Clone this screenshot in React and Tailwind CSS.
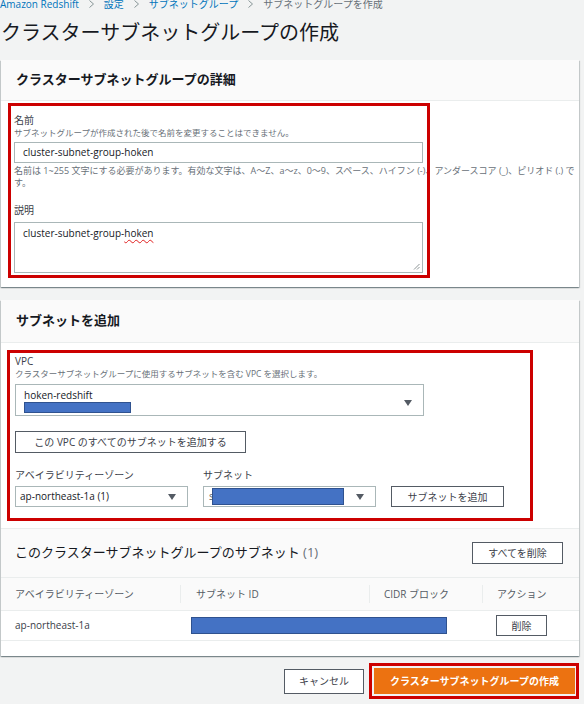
import React from 'react';

const Chevron = () => (
  <svg width="5" height="8" viewBox="0 0 5 8" className="mx-[10px] shrink-0">
    <path d="M0.5 0.5L4.5 4L0.5 7.5" fill="none" stroke="#879596" strokeWidth="1" />
  </svg>
);

const Caret = () => (
  <svg width="8" height="6" viewBox="0 0 8 6" className="shrink-0">
    <path d="M0 0h8L4 6z" fill="#545b64" />
  </svg>
);

// blue boxes that hide ids in the screenshot
const Redacted = ({ className }) => (
  <div className={`border border-[#2f528f] bg-[#4472c4] ${className}`} />
);

// red annotation frame drawn over the form
const Mark = ({ className }) => (
  <div className={`pointer-events-none absolute border-[3px] border-[#cc0000] ${className}`} />
);

const Card = ({ children, className = '' }) => (
  <div
    className={`relative bg-white shadow-[0_1px_1px_0_rgba(0,28,36,0.3),1px_1px_1px_0_rgba(0,28,36,0.15),-1px_1px_1px_0_rgba(0,28,36,0.15)] ${className}`}
  >
    {children}
  </div>
);

const Button = ({ children, className = '' }) => (
  <div
    className={`flex items-center justify-center border border-[#545b64] bg-white text-[10px] leading-[14px] text-[#3b4049] ${className}`}
  >
    {children}
  </div>
);

export default function App() {
  return (
    <div className="flex min-h-[704px] flex-col overflow-hidden bg-[#f2f3f3] pl-[1px] pr-[5px] font-['Open_Sans','Noto_Sans_CJK_JP',sans-serif] text-[#16191f]">
      <nav className="-ml-[1px] -mt-[3px] flex h-[14px] items-center text-[10px] leading-[14px]">
        <span className="text-[#0073bb]">Amazon Redshift</span>
        <Chevron />
        <span className="text-[#0073bb]">設定</span>
        <Chevron />
        <span className="text-[#0073bb]">サブネットグループ</span>
        <Chevron />
        <span className="text-[#687078]">サブネットグループを作成</span>
      </nav>

      <h1 className="mt-[8px] text-[20px] font-normal leading-[28px]">
        クラスターサブネットグループの作成
      </h1>

      {/* details */}
      <Card className="mt-[13px]">
        <div className="flex h-[41px] items-center border-b border-[#eaeded] bg-[#fafafa] px-[15px]">
          <h2 className="text-[13px] font-bold">クラスターサブネットグループの詳細</h2>
        </div>
        <div className="px-[13px] pb-[14px] pt-[12px]">
          <div className="text-[10px] leading-[14px] text-[#3b4049]">名前</div>
          <div className="text-[8.5px] leading-[12px] text-[#687078]">
            サブネットグループが作成された後で名前を変更することはできません。
          </div>
          <div className="mt-[3px] flex h-[21px] w-[409px] items-center border border-[#aab7b8] px-[8px] text-[10px]">
            cluster-subnet-group-hoken
          </div>
          <div className="mt-[2px] whitespace-nowrap text-[9px] leading-[12px] text-[#687078]">
            名前は 1~255 文字にする必要があります。有効な文字は、A～Z、a～z、0～9、スペース、ハイフン (-)、アンダースコア (_)、ピリオド (.) で
            <br />
            す。
          </div>
          <div className="mt-[14px] text-[10px] leading-[14px] text-[#3b4049]">説明</div>
          <div className="relative mt-[5px] h-[51px] w-[409px] border border-[#aab7b8] px-[8px] pt-[3px] text-[10px] leading-[14px]">
            cluster-subnet-group-
            <span className="underline decoration-[#e02020] decoration-wavy decoration-1 underline-offset-2">hoken</span>
            <svg width="7" height="7" viewBox="0 0 7 7" className="absolute bottom-[2px] right-[2px]">
              <path d="M6.5 1L1 6.5M6.5 4L4 6.5" stroke="#8d9596" strokeWidth="1" />
            </svg>
          </div>
        </div>
        <Mark className="left-[7px] top-[43px] h-[175px] w-[422px]" />
      </Card>

      {/* add subnets */}
      <Card className="mt-[13px]">
        <div className="flex h-[43px] items-center border-b border-[#eaeded] bg-[#fafafa] px-[15px]">
          <h2 className="text-[13px] font-bold">サブネットを追加</h2>
        </div>
        <div className="px-[14px] pb-[21px] pt-[12px]">
          <div className="text-[10px] leading-[13px] text-[#3b4049]">VPC</div>
          <div className="text-[8.5px] leading-[12px] text-[#687078]">
            クラスターサブネットグループに使用するサブネットを含む VPC を選択します。
          </div>
          <div className="mt-[4px] flex h-[32px] w-[409px] items-start justify-between border border-[#aab7b8] pl-[8px] pr-[11px] pt-[3px]">
            <div>
              <div className="text-[10px] leading-[14px]">hoken-redshift</div>
              <Redacted className="h-[11px] w-[107px]" />
            </div>
            <div className="pt-[12px]">
              <Caret />
            </div>
          </div>
          <Button className="mt-[15px] h-[22px] w-[231px]">この VPC のすべてのサブネットを追加する</Button>

          <div className="mt-[15px] flex items-end gap-[15px]">
            <div className="w-[173px]">
              <div className="text-[10px] leading-[14px] text-[#3b4049]">アベイラビリティーゾーン</div>
              <div className="mt-[4px] flex h-[21px] items-center justify-between border border-[#aab7b8] pl-[4px] pr-[11px] text-[10px]">
                <span>ap-northeast-1a (1)</span>
                <Caret />
              </div>
            </div>
            <div className="w-[173px]">
              <div className="text-[10px] leading-[14px] text-[#3b4049]">サブネット</div>
              <div className="mt-[4px] flex h-[21px] items-center justify-between border border-[#aab7b8] pl-[5px] pr-[11px] text-[10px]">
                <div className="relative flex items-center">
                  <span className="text-[#545b64]">s</span>
                  <Redacted className="-ml-[2px] h-[17px] w-[132px]" />
                </div>
                <Caret />
              </div>
            </div>
            <Button className="h-[21px] w-[113px]">サブネットを追加</Button>
          </div>
        </div>

        <div className="flex h-[49px] items-center justify-between border-t border-[#eaeded] bg-[#fafafa] pl-[14px] pr-[16px]">
          <h2 className="text-[13px] font-normal">
            このクラスターサブネットグループのサブネット <span className="text-[#687078]">(1)</span>
          </h2>
          <Button className="h-[22px] w-[91px]">すべてを削除</Button>
        </div>

        <div className="grid h-[34px] grid-cols-[179px_189px_113px_97px] items-center border-y border-[#eaeded] bg-[#fafafa] text-[10px] text-[#545b64]">
          <div className="pl-[14px]">アベイラビリティーゾーン</div>
          <div className="border-l border-[#eaeded] pl-[15px] leading-[18px]">サブネット ID</div>
          <div className="border-l border-[#eaeded] pl-[14px] leading-[18px]">CIDR ブロック</div>
          <div className="border-l border-[#eaeded] pl-[14px] leading-[18px]">アクション</div>
        </div>
        <div className="grid h-[30px] grid-cols-[179px_189px_113px_97px] items-center border-b border-[#eaeded] text-[10px]">
          <div className="pl-[14px] text-[#3b4049]">ap-northeast-1a</div>
          <div className="pl-[11px]">
            <Redacted className="h-[17px] w-[256px]" />
          </div>
          <div />
          <div className="pl-[14px]">
            <Button className="h-[21px] w-[51px]">削除</Button>
          </div>
        </div>
        <div className="h-[15px]" />

        <Mark className="left-[6px] top-[50px] h-[171px] w-[526px]" />
      </Card>

      <div className="mr-[4px] mt-[12px] flex items-center justify-end gap-[10px]">
        <Button className="h-[25px] w-[80px]">キャンセル</Button>
        <div className="relative">
          <div className="flex h-[26px] w-[201px] items-center justify-center bg-[#ec7211] text-[10px] font-bold text-white">
            クラスターサブネットグループの作成
          </div>
          <Mark className="-bottom-[5px] -left-[5px] -right-[4px] -top-[5px]" />
        </div>
      </div>
    </div>
  );
}
